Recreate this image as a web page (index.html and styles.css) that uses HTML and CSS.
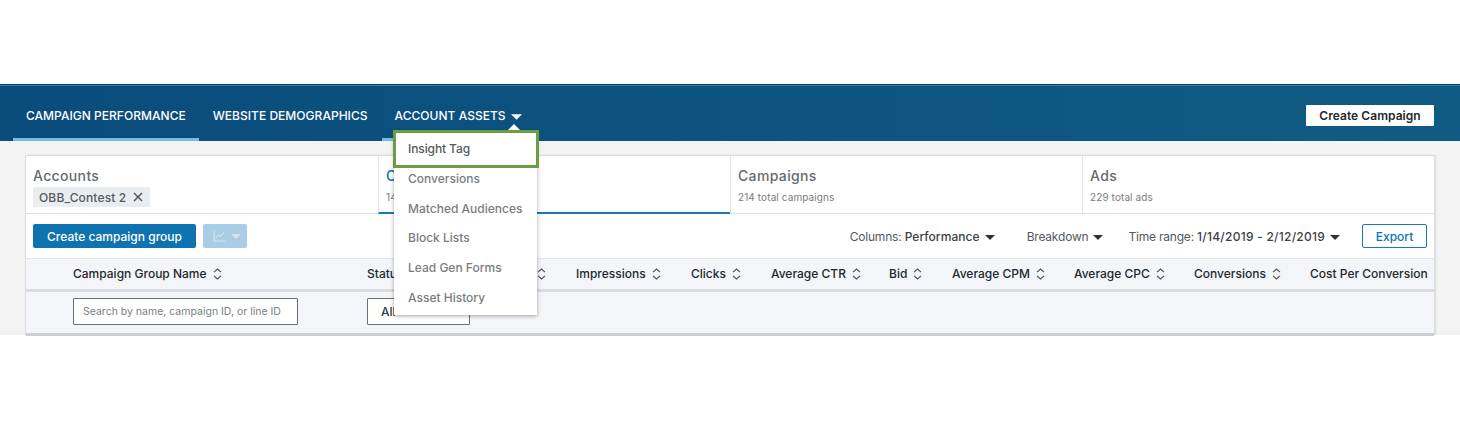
FILE: index.html
```html
<!DOCTYPE html>
<html lang="en">
<head>
<meta charset="utf-8">
<title>Campaign Manager</title>
<link rel="stylesheet" href="styles.css">
</head>
<body>
<div class="top-space"></div>
<main class="app">
  <header class="nav">
    <nav class="nav-links">
      <a class="nav-link active">CAMPAIGN PERFORMANCE</a>
      <a class="nav-link">WEBSITE DEMOGRAPHICS</a>
      <a class="nav-link open">ACCOUNT ASSETS <svg class="nav-caret" width="11" height="6" viewBox="0 0 10 5"><path d="M0 0h10L5 5z"/></svg></a>
    </nav>
    <button class="create-campaign">Create Campaign</button>
  </header>

  <section class="card">
    <div class="tabs">
      <div class="tab">
        <div class="tab-title">Accounts</div>
        <span class="chip">OBB_Contest 2 <svg width="10" height="10" viewBox="0 0 10 10"><path d="M1 1l8 8M9 1L1 9" stroke="#4a4f55" stroke-width="1.4" fill="none"/></svg></span>
      </div>
      <div class="tab selected">
        <div class="tab-title">Campaign Groups</div>
        <div class="tab-sub">14 total campaign groups</div>
      </div>
      <div class="tab">
        <div class="tab-title">Campaigns</div>
        <div class="tab-sub">214 total campaigns</div>
      </div>
      <div class="tab">
        <div class="tab-title">Ads</div>
        <div class="tab-sub">229 total ads</div>
      </div>
    </div>

    <div class="toolbar">
      <button class="primary">Create campaign group</button>
      <button class="chart-btn">
        <svg width="12" height="12" viewBox="0 0 12 12"><path d="M1 1v10h11M2.5 8.5l3-3.5 2 1.5L11 2.5" stroke="#d3e4f0" stroke-width="1.1" fill="none"/></svg>
        <svg width="10" height="5" viewBox="0 0 10 5"><path d="M0 0h10L5 5z" fill="#d3e4f0"/></svg>
      </button>
      <div class="toolbar-right">
        <span class="tool gap-a">Columns: <b>Performance</b><svg class="tri" width="10" height="5" viewBox="0 0 10 5"><path d="M0 0h10L5 5z"/></svg></span>
        <span class="tool gap-b">Breakdown<svg class="tri" width="10" height="5" viewBox="0 0 10 5"><path d="M0 0h10L5 5z"/></svg></span>
        <span class="tool gap-c">Time range: <b class="dates">1/14/2019 - 2/12/2019</b><svg class="tri" width="10" height="5" viewBox="0 0 10 5"><path d="M0 0h10L5 5z"/></svg></span>
        <button class="export">Export</button>
      </div>
    </div>

    <div class="thead">
      <span class="th">Campaign Group Name <svg class="sort" viewBox="0 0 9 12"><use href="#sort"/></svg></span>
      <span class="th">Status</span>
      <span class="th th-end"><svg class="sort" viewBox="0 0 9 12"><use href="#sort"/></svg></span>
      <span class="th">Impressions <svg class="sort" viewBox="0 0 9 12"><use href="#sort"/></svg></span>
      <span class="th">Clicks <svg class="sort" viewBox="0 0 9 12"><use href="#sort"/></svg></span>
      <span class="th">Average CTR <svg class="sort" viewBox="0 0 9 12"><use href="#sort"/></svg></span>
      <span class="th">Bid <svg class="sort" viewBox="0 0 9 12"><use href="#sort"/></svg></span>
      <span class="th">Average CPM <svg class="sort" viewBox="0 0 9 12"><use href="#sort"/></svg></span>
      <span class="th">Average CPC <svg class="sort" viewBox="0 0 9 12"><use href="#sort"/></svg></span>
      <span class="th">Conversions <svg class="sort" viewBox="0 0 9 12"><use href="#sort"/></svg></span>
      <span class="th">Cost Per Conversion</span>
    </div>

    <div class="filters">
      <div class="search">Search by name, campaign ID, or line ID</div>
      <div class="status-select">All</div>
    </div>
  </section>

  <div class="menu">
    <svg class="menu-tip" width="14" height="7" viewBox="0 0 14 7"><path d="M0 7L7 0l7 7z" fill="#fff"/></svg>
    <a class="menu-item highlighted">Insight Tag</a>
    <a class="menu-item">Conversions</a>
    <a class="menu-item">Matched Audiences</a>
    <a class="menu-item">Block Lists</a>
    <a class="menu-item">Lead Gen Forms</a>
    <a class="menu-item">Asset History</a>
  </div>
</main>
<svg class="defs" width="0" height="0"><defs><g id="sort"><path d="M1 4.2L4.5 1 8 4.2M1 7.8L4.5 11 8 7.8" fill="none" stroke="#4a4f55" stroke-width="1.1"/></g></defs></svg>
</body>
</html>
```
FILE: styles.css
```css
* { box-sizing: border-box; }
html, body { margin: 0; padding: 0; background: #fff; }
body { width: 1460px; height: 424px; overflow: hidden; font-family: Inter, "Liberation Sans", sans-serif; }
.top-space { height: 84px; }
.defs { position: absolute; }
.app { position: relative; height: 251px; background: #f3f3f3; }

.nav { height: 57px; display: flex; justify-content: space-between; padding-left: 13px; padding-right: 26px; background: linear-gradient(90deg, #0a4c7c, #105b84); border-top: 1px solid #0a3f63; box-shadow: inset 0 1px 0 #3a7aa3; }
.nav-links { display: flex; }
.nav-link { display: flex; align-items: center; height: 56px; padding: 8px 13px 0; margin-right: 1px; color: #fff; font-size: 12px; font-weight: 500; letter-spacing: .03px; border-bottom: 3px solid transparent; white-space: nowrap; }
.nav-link.active { border-bottom-color: #74bce6; }
.nav-link.open { border-bottom-color: #74bce6; }
.nav-caret { fill: #fff; margin-left: 5px; margin-top: 2px; }
.create-campaign { align-self: flex-start; margin-top: 20px; width: 128px; height: 21px; border: 0; border-radius: 1px; background: #fff; color: #23282d; font: 600 12px Inter, "Liberation Sans", sans-serif; letter-spacing: .05px; padding: 0; }

.card { position: absolute; left: 25px; top: 71px; width: 1410px; height: 180px; background: #fff; border: 1px solid #dcdcdc; border-bottom: 0; border-radius: 2px 2px 0 0; box-shadow: 1px 0 2px rgba(0,0,0,.1); }

.tabs { display: grid; grid-template-columns: repeat(4, 352px); height: 58px; border-bottom: 1px solid #dfdfdf; }
.tab { padding: 11px 7px 0; border-left: 1px solid #e3e3e3; height: 57px; }
.tab:first-child { border-left: 0; }
.tab.selected { border-bottom: 2px solid #1b79b6; height: 58px; }
.tab-title { font-size: 14px; font-weight: 500; line-height: 17px; letter-spacing: .35px; color: #666a6e; }
.selected .tab-title { color: #0f73b1; }
.tab-sub { margin-top: 6px; font-size: 10px; line-height: 14px; letter-spacing: .1px; color: #7a7d80; }
.chip { display: inline-flex; align-items: center; gap: 7px; height: 20px; margin-top: 3px; padding: 0 7px 0 6px; background: #e9edf0; color: #555a5f; font-size: 12px; font-weight: 500; letter-spacing: .15px; border-radius: 1px; }

.toolbar { display: flex; align-items: center; height: 45px; padding: 0 7px; border-bottom: 1px solid #e3e5e8; }
.primary { width: 163px; height: 24px; padding: 0; border: 0; border-radius: 2px; background: #0f73b1; color: #fff; font: 500 12px Inter, "Liberation Sans", sans-serif; }
.chart-btn { display: flex; align-items: center; justify-content: space-between; width: 44px; height: 24px; margin-left: 7px; padding: 0 6px 0 10px; border: 0; border-radius: 2px; background: #a9cde4; }
.toolbar-right { display: flex; align-items: center; margin-left: auto; color: #55595d; font-size: 12px; letter-spacing: -.2px; }
.tool { white-space: nowrap; }
.tool b { font-weight: 500; color: #3c4146; letter-spacing: .05px; }
.tool b.dates { letter-spacing: .25px; }
.tri { fill: #2d3135; margin-left: 5px; vertical-align: 1px; }
.gap-a { margin-right: 32px; }
.gap-b { margin-right: 25px; }
.gap-c { margin-right: 22px; }
.export { width: 65px; height: 24px; padding: 0; border: 1px solid #1b79b6; border-radius: 2px; background: #fff; color: #0f73b1; font: 500 12px Inter, "Liberation Sans", sans-serif; }

.thead { display: grid; grid-template-columns: 294px 160px 49px 115px 80px 118px 63px 122px 120px 116px 1fr; align-items: center; height: 33px; padding-left: 47px; padding-bottom: 1px; background: #f3f5f8; border-bottom: 3px solid #dadcdf; }
.th { display: flex; align-items: center; gap: 6px; color: #23282d; font-size: 12px; font-weight: 500; white-space: nowrap; }
.th-end { justify-content: flex-end; padding-right: 30px; }
.sort { width: 9px; height: 12px; flex: none; }

.filters { display: flex; align-items: center; gap: 69px; height: 44px; padding: 0 0 3px 47px; background: #f3f5f8; border-bottom: 3px solid #cdd0d3; }
.search { width: 225px; height: 27px; padding-left: 9px; border: 1px solid #6c7075; border-radius: 1px; background: #fff; color: #7b7f83; font-size: 10.5px; line-height: 26px; white-space: nowrap; }
.status-select { width: 103px; height: 27px; padding-left: 13px; border: 1px solid #6c7075; border-radius: 1px; background: #fff; color: #33383d; font-size: 12px; font-weight: 500; line-height: 25px; }

.menu { position: absolute; left: 394px; top: 47px; width: 143px; height: 184px; padding-top: 3px; background: #fff; box-shadow: 0 1px 4px rgba(0,0,0,.35); }
.menu-tip { position: absolute; left: 113px; top: -7px; }
.menu-item { display: block; height: 29.7px; padding-left: 14px; color: #7a7d80; font-size: 12px; font-weight: 500; line-height: 29px; white-space: nowrap; }
.menu-item.highlighted { position: relative; height: 38px; margin: -4px -2px -4px -1px; padding-left: 12px; border: 3px solid #6b9e3f; color: #55595d; letter-spacing: -.1px; line-height: 32px; }
```
